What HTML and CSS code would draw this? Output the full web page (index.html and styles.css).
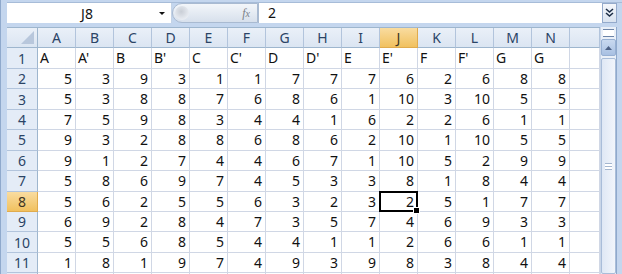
FILE: index.html
```html
<!DOCTYPE html>
<html>
<head>
    <meta charset="UTF-8">
    <title>Planilha</title>
    <link rel="stylesheet" href="styles.css">
</head>

<body>
<div class="window">
    <div class="formula-bar">
        <div class="name-box">
            <span class="name">J8</span>
            <span class="name-arrow"></span>
        </div>
        <div class="fx-pill">
            <span class="knob"></span>
            <span class="fx">f<i>x</i></span>
        </div>
        <div class="formula-input">2</div>
        <div class="expand">
            <svg width="9" height="10" viewBox="0 0 9 10">
                <path d="M1 1 L4.5 4 L8 1 M1 5 L4.5 8 L8 5" fill="none" stroke="#1e2f47" stroke-width="1.6"/>
            </svg>
        </div>
    </div>

    <div class="sheet-area">
        <div class="grid" id="grid"></div>
        <div class="vscroll">
            <div class="split-box"></div>
            <div class="scroll-up">
                <svg width="7" height="4" viewBox="0 0 7 4"><path d="M0 4 L3.5 0 L7 4 Z" fill="#4d6185"/></svg>
            </div>
            <div class="scroll-thumb"><span class="grip"></span></div>
        </div>
    </div>
</div>

<script>
    const cols = ['A', 'B', 'C', 'D', 'E', 'F', 'G', 'H', 'I', 'J', 'K', 'L', 'M', 'N'];
    const headers = ["A", "A'", "B", "B'", "C", "C'", "D", "D'", "E", "E'", "F", "F'", "G", "G"];
    const data = [
        [5, 3, 9, 3, 1, 1, 7, 7, 7, 6, 2, 6, 8, 8],
        [5, 3, 8, 8, 7, 6, 8, 6, 1, 10, 3, 10, 5, 5],
        [7, 5, 9, 8, 3, 4, 4, 1, 6, 2, 2, 6, 1, 1],
        [9, 3, 2, 8, 8, 6, 8, 6, 2, 10, 1, 10, 5, 5],
        [9, 1, 2, 7, 4, 4, 6, 7, 1, 10, 5, 2, 9, 9],
        [5, 8, 6, 9, 7, 4, 5, 3, 3, 8, 1, 8, 4, 4],
        [5, 6, 2, 5, 5, 6, 3, 2, 3, 2, 5, 1, 7, 7],
        [6, 9, 2, 8, 4, 7, 3, 5, 7, 4, 6, 9, 3, 3],
        [5, 5, 6, 8, 5, 4, 4, 1, 1, 2, 6, 6, 1, 1],
        [1, 8, 1, 9, 7, 4, 9, 3, 9, 8, 3, 8, 4, 4]
    ];
    const grid = document.getElementById('grid');

    function cell(text, cls) {
        const div = document.createElement('div');
        div.className = cls;
        div.textContent = text;
        grid.appendChild(div);
        return div;
    }

    // cabeçalho das colunas
    cell('', 'corner');
    cols.forEach(c => cell(c, c === 'J' ? 'col-head active' : 'col-head'));
    cell('', 'col-head blank');

    // linha 1 com texto
    cell('1', 'row-head');
    headers.forEach(h => cell(h, 'cell text'));
    cell('', 'cell');

    data.forEach((row, i) => {
        const r = i + 2;
        cell(r, r === 8 ? 'row-head active' : 'row-head');
        row.forEach((v, j) => {
            const c = cell(v, 'cell num');
            if (r === 8 && j === 9) {
                c.classList.add('selected');
                const handle = document.createElement('span');
                handle.className = 'fill-handle';
                c.appendChild(handle);
            }
        });
        cell('', 'cell');
    });

    // linha 12, quase toda fora da tela
    cell('', 'row-head');
    for (let j = 0; j < 15; j++) cell('', 'cell');
</script>
</body>
</html>
```

FILE: styles.css
```css
body {
    margin: 0;
    width: 622px;
    height: 274px;
    overflow: hidden;
    background-color: #c4d6ee;
    font-family: "Noto Sans", Arial, sans-serif;
}

.window {
    height: 274px;
    display: flex;
    flex-direction: column;
    padding-left: 6px;
    box-sizing: border-box;
    border-left: 1px solid #8fa9cc;
}

/* barra de fórmulas */
.formula-bar {
    display: flex;
    height: 20px;
    margin-top: 2px;
    margin-bottom: 4px;
    border-top: 1px solid #a7bcd8;
}

.name-box {
    width: 164px;
    display: flex;
    align-items: center;
    background-color: #fff;
    border-right: 1px solid #c4d3e6;
}

.name {
    flex: 1;
    text-align: center;
    font-size: 14px;
    color: #111;
    padding-left: 8px;
}

.name-arrow {
    width: 0;
    height: 0;
    border-left: 3px solid transparent;
    border-right: 3px solid transparent;
    border-top: 3px solid #111;
    margin-right: 6px;
}

.fx-pill {
    width: 86px;
    display: flex;
    align-items: center;
    justify-content: space-between;
    background: linear-gradient(#f3f6fa, #d7e0ec);
    border: 1px solid #a9bad1;
    border-radius: 10px 0 0 10px;
    box-sizing: border-box;
}

.knob {
    width: 14px;
    height: 14px;
    margin-left: 2px;
    border-radius: 50%;
    background: radial-gradient(circle at 45% 40%, #c9ced6, #e8ecf2 70%);
}

.fx {
    font-family: "Liberation Serif", serif;
    font-style: italic;
    font-size: 12px;
    color: #7a7f87;
    margin-right: 7px;
}

.fx i {
    font-size: 10px;
}

.formula-input {
    flex: 1;
    background-color: #fff;
    border-left: 1px solid #a9bad1;
    font-size: 14px;
    line-height: 20px;
    padding-left: 9px;
    color: #111;
}

.expand {
    width: 15px;
    display: flex;
    align-items: center;
    justify-content: center;
    background: linear-gradient(#f4f7fb, #d9e3f0);
    border: 1px solid #94aacb;
    box-sizing: border-box;
    margin-right: 5px;
}

/* planilha */
.sheet-area {
    flex: 1;
    display: flex;
    min-height: 0;
}

.grid {
    flex: 1;
    display: grid;
    grid-template-columns: 31px repeat(14, 38px) 1fr;
    grid-auto-rows: 20.45px;
    background-color: #fff;
    overflow: hidden;
    border-top: 1px solid #9eb6ce;
}

.corner,
.col-head,
.row-head {
    background: linear-gradient(#eaf0f8, #dbe5f2);
    color: #2b4466;
    font-size: 14px;
    display: flex;
    align-items: center;
    justify-content: center;
    border-right: 1px solid #b2c4dc;
    border-bottom: 1px solid #9eb6ce;
    box-sizing: border-box;
}

.row-head {
    border-bottom: 1px solid #b2c4dc;
    border-right: 1px solid #9eb6ce;
    background: #e4ecf7;
}

.corner {
    position: relative;
    border-right: 1px solid #9eb6ce;
}

.corner::after {
    content: "";
    position: absolute;
    right: 3px;
    bottom: 3px;
    border-left: 13px solid transparent;
    border-bottom: 13px solid #b8c7dc;
}

.col-head.active,
.row-head.active {
    background: linear-gradient(#f9dca0, #f1c15f);
    color: #3c3524;
    border-color: #e0ab4d;
}

.cell {
    border-right: 1px solid #d0d7e5;
    border-bottom: 1px solid #d0d7e5;
    font-size: 14px;
    color: #111;
    line-height: 19px;
    box-sizing: border-box;
    white-space: nowrap;
}

.cell.text {
    padding-left: 2px;
}

.cell.num {
    text-align: right;
    padding-right: 3px;
}

.cell.selected {
    position: relative;
    border: 2px solid #000;
    margin: -1px 0 0 -1px;
    line-height: 17px;
    padding-right: 2px;
}

.fill-handle {
    position: absolute;
    right: -4px;
    bottom: -4px;
    width: 5px;
    height: 5px;
    background-color: #000;
    border: 1px solid #fff;
}

/* barra de rolagem */
.vscroll {
    width: 15px;
    margin-right: 5px;
    display: flex;
    flex-direction: column;
    background-color: #eaf0f8;
    border-left: 1px solid #c9d6e8;
    border-right: 1px solid #8fa9cc;
}

.split-box {
    height: 6px;
    margin: 2px 2px 2px;
    border-top: 1px solid #6c84a8;
    border-bottom: 1px solid #6c84a8;
    background-color: #fff;
}

.scroll-up {
    height: 15px;
    display: flex;
    align-items: center;
    justify-content: center;
    background: linear-gradient(#c9d9ef, #a8c0e2);
    border: 1px solid #97b0d3;
    border-radius: 2px;
}

.scroll-thumb {
    flex: 1;
    margin-top: 2px;
    display: flex;
    align-items: center;
    justify-content: center;
    background: linear-gradient(90deg, #dfe8f5, #f1f5fb);
    border: 1px solid #a9bdd9;
    border-radius: 2px;
}

.grip {
    width: 7px;
    height: 5px;
    border-top: 1px solid #a4b6cf;
    border-bottom: 1px solid #a4b6cf;
    background: linear-gradient(#fff 40%, #a4b6cf 40%, #a4b6cf 60%, #fff 60%);
}
```
